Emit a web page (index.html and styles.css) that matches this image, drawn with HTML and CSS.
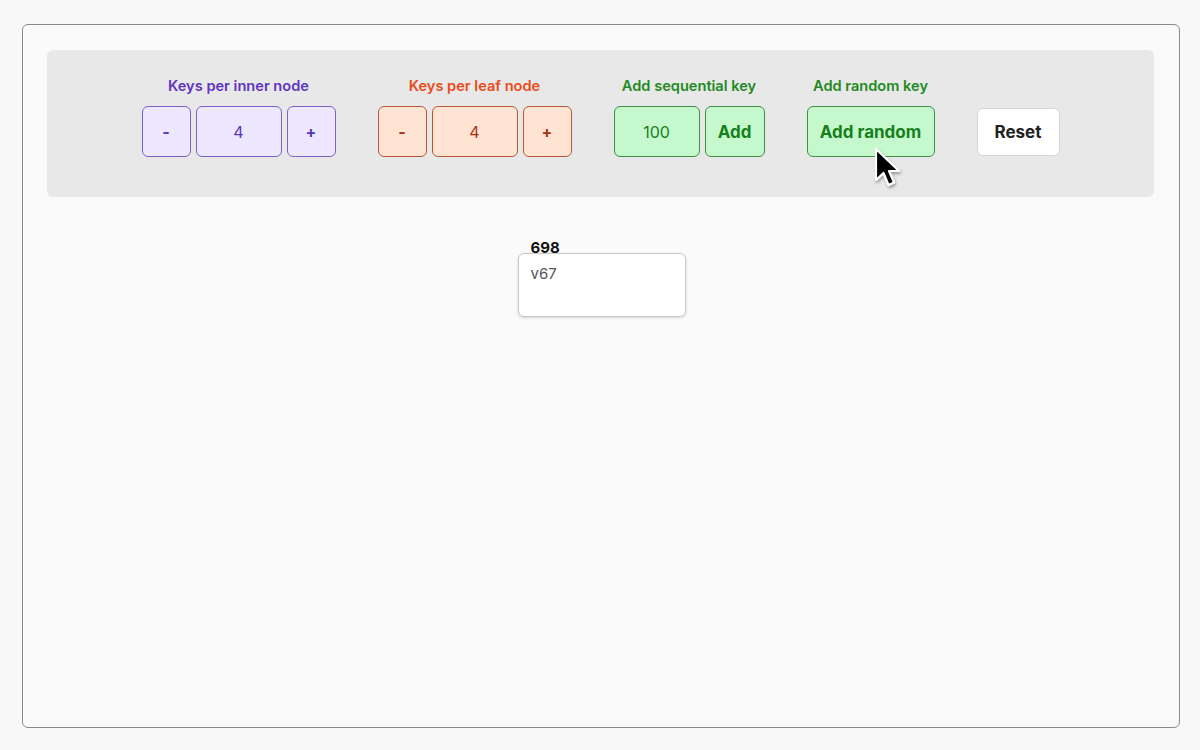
FILE: index.html
```html
<!DOCTYPE html>
<html>
<head>
  <title>B+ tree</title>
  <link rel="stylesheet" href="styles.css">
</head>
<body>
  <div class="frame">
    <div class="toolbar">
      <div class="group inner">
        <div class="group-label">Keys per inner node</div>
        <div class="controls">
          <button class="btn small">-</button>
          <div class="field">4</div>
          <button class="btn small">+</button>
        </div>
      </div>
      <div class="group leaf">
        <div class="group-label">Keys per leaf node</div>
        <div class="controls">
          <button class="btn small">-</button>
          <div class="field">4</div>
          <button class="btn small">+</button>
        </div>
      </div>
      <div class="group add">
        <div class="group-label">Add sequential key</div>
        <div class="controls">
          <div class="field">100</div>
          <button class="btn add-btn">Add</button>
        </div>
      </div>
      <div class="group add">
        <div class="group-label">Add random key</div>
        <div class="controls">
          <button class="btn random-btn">Add random</button>
        </div>
      </div>
      <button class="reset-btn">Reset</button>
    </div>

    <div class="tree">
      <div class="node">
        <div class="node-key">698</div>
        <div class="node-box">v67</div>
      </div>
    </div>

    <svg class="cursor" width="34" height="48" viewBox="0 0 34 48">
      <defs>
        <filter id="sh" x="-30%" y="-30%" width="160%" height="160%">
          <feDropShadow dx="1" dy="2" stdDeviation="1.5" flood-color="#000" flood-opacity="0.35"/>
        </filter>
      </defs>
      <path filter="url(#sh)" d="M2 2 L2 33 L9.5 26 L14.5 38 L20 35.5 L15 24 L25 24 Z" fill="#000" stroke="#fff" stroke-width="2.2" stroke-linejoin="round"/>
    </svg>
  </div>
</body>
</html>
```

FILE: styles.css
```css
body {
  margin: 0;
  background: #f8f8f8;
  font-family: Inter, 'Noto Sans', sans-serif;
}
.frame {
  position: relative;
  margin: 24px 0 0 22px;
  width: 1158px;
  height: 704px;
  border: 1px solid #8a8a8a;
  border-radius: 6px;
  background: #fafafa;
  padding: 25px 25px 0 24px;
  box-sizing: border-box;
}
.toolbar {
  background: #e8e8e8;
  border-radius: 6px;
  height: 147px;
  box-sizing: border-box;
  padding-top: 27px;
  display: flex;
  justify-content: center;
  align-items: flex-start;
  gap: 42px;
}
.group {
  display: flex;
  flex-direction: column;
  align-items: center;
}
.group-label {
  font-size: 14.6px;
  font-weight: 600;
  line-height: 18px;
  margin-bottom: 11px;
}
.controls {
  display: flex;
  gap: 5px;
}
.btn, .field {
  height: 51px;
  box-sizing: border-box;
  border-radius: 6px;
  border: 1px solid;
  font-family: inherit;
  font-size: 16px;
  display: flex;
  align-items: center;
  justify-content: center;
  padding: 0;
}
.btn {
  font-weight: 700;
}
.small {
  width: 49px;
}
.field {
  width: 86px;
}
.inner .group-label { color: #6035c2; }
.inner .btn, .inner .field {
  background: #ede7ff;
  border-color: #7b62c4;
  color: #5a35b8;
}
.leaf .group-label { color: #e84c1a; }
.leaf .btn, .leaf .field {
  background: #ffe4d4;
  border-color: #b85838;
  color: #a83314;
}
.add .group-label { color: #1f8a22; }
.add .btn, .add .field {
  background: #c5f8cd;
  border-color: #3f8f47;
  color: #17801b;
}
.add-btn {
  width: 60px;
  font-size: 17px;
}
.random-btn {
  width: 128px;
  font-size: 17px;
}
.reset-btn {
  margin-top: 31px;
  width: 83px;
  height: 48px;
  background: #fff;
  border: 1px solid #d6d6d6;
  border-radius: 6px;
  font-family: inherit;
  font-size: 17px;
  font-weight: 700;
  color: #222;
}
.tree {
  display: flex;
  justify-content: center;
  padding-top: 43px;
  padding-left: 2px;
}
.node-key {
  font-size: 15px;
  font-weight: 700;
  color: #111;
  line-height: 16px;
  padding-left: 13px;
  margin-bottom: -3px;
}
.node-box {
  width: 168px;
  height: 64px;
  box-sizing: border-box;
  background: #fff;
  border: 1px solid #c8c8c8;
  border-radius: 6px;
  box-shadow: 0 1px 3px rgba(0, 0, 0, 0.15);
  padding: 10px 12px;
  font-size: 15px;
  color: #555;
}
.cursor {
  position: absolute;
  left: 851px;
  top: 122px;
}
```
